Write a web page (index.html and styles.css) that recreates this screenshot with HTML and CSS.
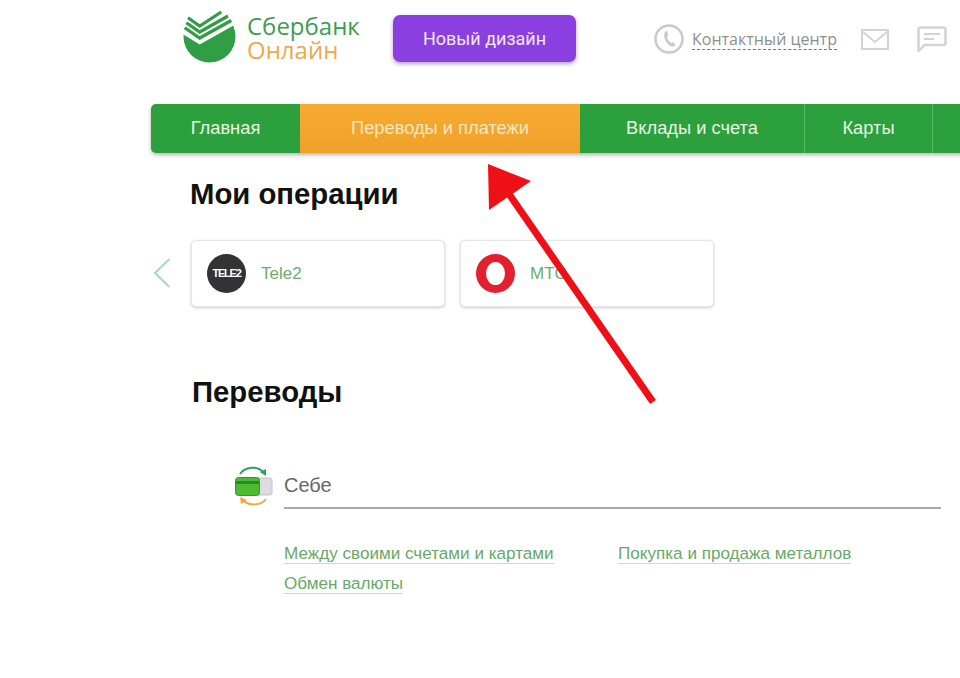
FILE: index.html
```html
<!DOCTYPE html>
<html lang="ru">
<head>
	<meta charset="utf-8">
	<title>Сбербанк Онлайн</title>
	<link rel="stylesheet" href="styles.css">
</head>
<body>
	<header class="top">
		<a class="logo">
			<svg class="logo-mark" width="54" height="52" viewBox="0 0 54 52">
				<circle cx="26.500" cy="25.500" r="26" fill="#2f9e44"/>
				<path d="M-2 -4H56V11.500L16.700 33.500L-2 22Z" fill="#fff"/>
				<path d="M5 6.700L16.700 15L38.300 1" fill="none" stroke="#2f9e44" stroke-width="3.200"/>
				<path d="M3.300 11.700L16.700 21L45 5" fill="none" stroke="#2f9e44" stroke-width="3.200"/>
				<path d="M1.700 16.700L16.700 27L48.300 9.500" fill="none" stroke="#2f9e44" stroke-width="3.200"/>
			</svg>
			<span class="logo-text">
				<span class="logo-sber">Сбербанк</span>
				<span class="logo-online">Онлайн</span>
			</span>
		</a>
		<button class="new-design">Новый дизайн</button>
		<div class="top-links">
			<svg class="icon-phone" width="30" height="30" viewBox="0 0 30 30">
				<circle cx="15" cy="15" r="13.500" fill="none" stroke="#c9cbc9" stroke-width="2.500"/>
				<path d="M11 7.500L13 7L14.500 11L13 12.500C13.500 15 15 17.500 17 19L19 18L21.500 21L20 22.500C17.500 23.500 14 21 12 17.500C10 14 9.500 10 11 7.500Z" fill="#c9cbc9"/>
			</svg>
			<span class="contact">Контактный центр</span>
			<svg class="icon-mail" width="28" height="21" viewBox="0 0 28 21">
				<rect x="1" y="1" width="26" height="19" fill="none" stroke="#d2d4d2" stroke-width="2"/>
				<path d="M2 3L14 13L26 3" fill="none" stroke="#d2d4d2" stroke-width="2"/>
			</svg>
			<svg class="icon-chat" width="30" height="26" viewBox="0 0 30 26">
				<path d="M1.500 25V3.500Q1.500 1.500 3.500 1.500H26.500Q28.500 1.500 28.500 3.500V17Q28.500 19 26.500 19H7.500Z" fill="none" stroke="#d2d4d2" stroke-width="2.500"/>
				<path d="M7 8H23M7 13H17" stroke="#d2d4d2" stroke-width="2"/>
			</svg>
		</div>
	</header>

	<nav class="menu">
		<a class="tab tab-home">Главная</a>
		<a class="tab tab-active">Переводы и платежи</a>
		<a class="tab tab-deposits">Вклады и счета</a>
		<a class="tab tab-cards">Карты</a>
		<a class="tab tab-more"></a>
	</nav>

	<main class="content">
		<h2 class="title-ops">Мои операции</h2>
		<div class="ops">
			<svg class="ops-prev" width="18" height="30" viewBox="0 0 18 30">
				<path d="M16.500 1L2 15L16.500 29" fill="none" stroke="#a5dcb4" stroke-width="2"/>
			</svg>
			<div class="op-card">
				<span class="op-logo op-tele2">TELE2</span>
				<span class="op-name">Tele2</span>
			</div>
			<div class="op-card">
				<span class="op-logo op-mts"></span>
				<span class="op-name">МТС</span>
			</div>
		</div>

		<h2 class="title-transfers">Переводы</h2>
		<section class="transfer">
			<svg class="transfer-icon" width="38" height="40" viewBox="0 0 38 40">
				<path d="M5 8C10 1 22 -1 28 6" fill="none" stroke="#2f9e5a" stroke-width="2"/>
				<path d="M31 10L31 3L25 6Z" fill="#2f9e5a"/>
				<rect x="21" y="12" width="16" height="17" rx="2" fill="#dcdce0" stroke="#c4c4c8"/>
				<rect x="0.500" y="11.500" width="24" height="18" rx="3" fill="#4cbb2e" stroke="#2a9a34"/>
				<rect x="1" y="15" width="23" height="3" fill="#23873a"/>
				<path d="M31 33C27 39 14 41 8 34" fill="none" stroke="#f2aa3c" stroke-width="2"/>
				<path d="M5 31L6 38L12 34Z" fill="#f2aa3c"/>
			</svg>
			<div class="transfer-body">
				<div class="transfer-name">Себе</div>
				<div class="transfer-links">
					<a class="link">Между своими счетами и картами</a>
					<a class="link">Покупка и продажа металлов</a>
					<a class="link">Обмен валюты</a>
				</div>
			</div>
		</section>
	</main>

	<svg class="arrow" width="960" height="678" viewBox="0 0 960 678">
		<path d="M653 402L509 194" stroke="#ee0f17" stroke-width="7" fill="none"/>
		<path d="M488 164L531 181L489 210Z" fill="#ee0f17"/>
	</svg>
</body>
</html>
```

FILE: styles.css
```css
html, body{
	margin: 0;
	height: 100%;
}

body{
	position: relative;
	overflow: hidden;
	background: #fff;
	font-family: "Liberation Sans", Arial, sans-serif;
}

.top{
	display: flex;
	align-items: flex-start;
	height: 104px;
	padding-left: 183px;
	box-sizing: border-box;
}

.logo{
	display: flex;
	width: 210px;
	padding-top: 11px;
}

.logo-mark{
	overflow: hidden;
	flex: none;
}

.logo-text{
	display: flex;
	flex-direction: column;
	margin: 3px 0 0 10px;
	font-family: "Open Sans", sans-serif;
	font-size: 24px;
	line-height: 24px;
}

.logo-sber{
	color: #3c9c52;
}

.logo-online{
	color: #eda94f;
}

.new-design{
	width: 183px;
	height: 47px;
	margin-top: 15px;
	border: none;
	border-radius: 7px;
	background: #8b3fe0;
	box-shadow: 0 2px 4px rgba(60, 20, 120, 0.4);
	color: #f1e8fb;
	font-family: "Roboto", sans-serif;
	font-size: 18px;
}

.top-links{
	display: flex;
	align-items: center;
	margin: 24px 0 0 78px;
}

.contact{
	margin-left: 8px;
	border-bottom: 1px dashed #777;
	color: #8d8f8d;
	font-family: "Open Sans", sans-serif;
	font-size: 16px;
	line-height: 20px;
	white-space: nowrap;
}

.icon-mail{
	margin-left: 24px;
}

.icon-chat{
	margin-left: 28px;
	flex: none;
}

.menu{
	display: flex;
	width: 840px;
	height: 49px;
	margin-left: 151px;
	border-radius: 5px 0 0 5px;
	background: #2ca03c;
	box-shadow: 0 2px 4px rgba(0, 0, 0, 0.3);
}

.tab{
	display: flex;
	justify-content: center;
	align-items: center;
	box-sizing: border-box;
	padding-bottom: 1px;
	border-right: 1px solid #5cb868;
	color: #e9f6e6;
	font-size: 18.300px;
	flex: none;
}

.tab-home{
	width: 149px;
	border-right: none;
	border-radius: 5px 0 0 5px;
}

.tab-active{
	width: 280px;
	border-right: none;
	background: linear-gradient(#f6ac30, #f0a02a);
	color: #fae6c4;
}

.tab-deposits{
	width: 225px;
}

.tab-cards{
	width: 128px;
}

.tab-more{
	flex: 1;
	border-right: none;
}

.content{
	padding-left: 190px;
}

.content h2{
	margin: 0;
	color: #111;
	font-size: 29.300px;
	line-height: 32px;
	font-weight: bold;
}

.title-ops{
	padding-top: 25px;
}

.ops{
	display: flex;
	align-items: center;
	gap: 15px;
	margin-top: 30px;
	position: relative;
}

.ops-prev{
	position: absolute;
	left: -37px;
	top: 18px;
}

.op-card{
	display: flex;
	align-items: center;
	gap: 15px;
	width: 254px;
	height: 67px;
	box-sizing: border-box;
	margin-left: 1px;
	padding-left: 15px;
	border: 1px solid #e6e6e6;
	border-radius: 5px;
	background: #fff;
	box-shadow: 0 1px 3px rgba(0, 0, 0, 0.2);
}

.op-card + .op-card{
	margin-left: 0;
}

.op-logo{
	display: block;
	box-sizing: border-box;
	width: 39px;
	height: 39px;
	border-radius: 50%;
	flex: none;
}

.op-tele2{
	background: #333;
	color: #fff;
	font-size: 11px;
	font-weight: bold;
	line-height: 39px;
	letter-spacing: -1.200px;
	text-align: center;
}

.op-mts{
	border: 8px solid #e4202f;
	border-left-width: 10px;
	border-right-width: 10px;
	background: #fff;
}

.op-name{
	color: #6cac6e;
	font-size: 17px;
}

.title-transfers{
	padding: 69px 0 0 2px;
}

.transfer{
	display: flex;
	gap: 11px;
	margin: 58px 0 0 45px;
}

.transfer-icon{
	flex: none;
}

.transfer-body{
	flex: 1;
	margin-right: 19px;
}

.transfer-name{
	height: 43px;
	box-sizing: border-box;
	padding-top: 7px;
	border-bottom: 2px solid #a8a8a8;
	color: #666;
	font-size: 20px;
	line-height: 24px;
}

.transfer-links{
	display: grid;
	grid-template-columns: 334px 1fr;
	row-gap: 11px;
	margin-top: 36px;
	justify-items: start;
}

.link{
	border-bottom: 1px solid #c3dfc3;
	color: #68a868;
	font-size: 17.100px;
	line-height: 18px;
	white-space: nowrap;
}

.arrow{
	position: absolute;
	left: 0;
	top: 0;
	pointer-events: none;
}
```
